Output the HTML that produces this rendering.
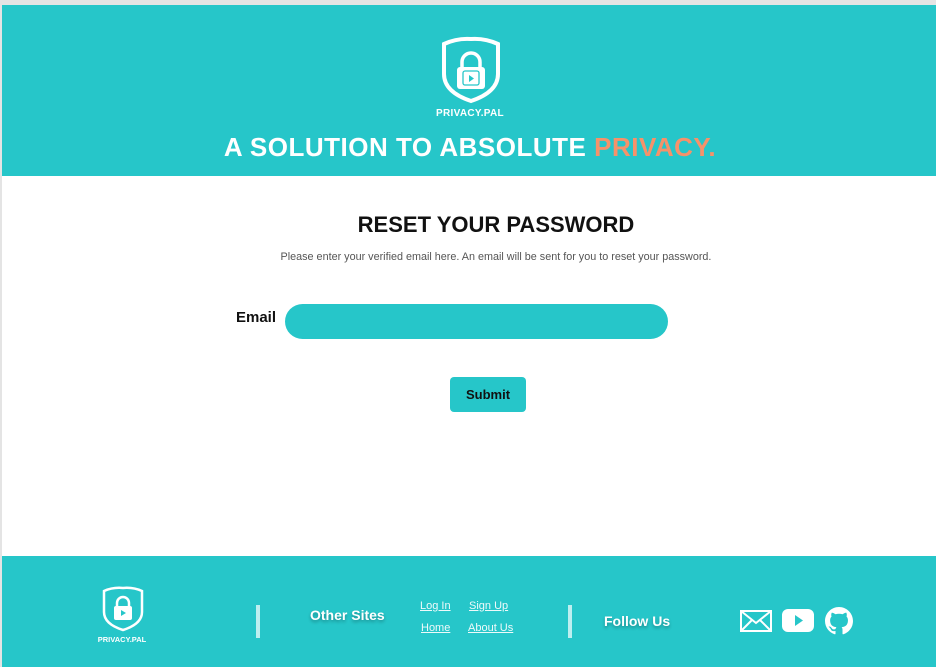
<!DOCTYPE html>
<html><head><style>
*{margin:0;padding:0;box-sizing:border-box}
body{width:936px;height:667px;background:#e4e4e4;position:relative;overflow:hidden;font-family:"Liberation Sans",sans-serif}
.hdr{position:absolute;left:2px;top:5px;width:934px;height:171px;background:#26c6c9}
.main{position:absolute;left:2px;top:176px;width:934px;height:380px;background:#fff}
.ftr{position:absolute;left:2px;top:556px;width:934px;height:111px;background:#26c6c9}
.abs{position:absolute}
.w{color:#fff}
.link{color:#eefafa;font-size:11px;text-decoration:underline}
.sh{text-shadow:0 2px 3px rgba(0,0,0,.3)}
</style></head><body>
<div class="hdr"></div><div class="main"></div><div class="ftr"></div>

<svg class="abs" style="left:441px;top:36px" width="60" height="68" viewBox="0 0 60 68">
<path d="M30 3 Q44 2 57 8 V38 Q57 56 30 65 Q3 56 3 38 V8 Q16 2 30 3Z" fill="none" stroke="#fff" stroke-width="4"/>
<path d="M21 32 V26 a9 9 0 0 1 18 0 V32" fill="none" stroke="#fff" stroke-width="3.5"/>
<rect x="16" y="31" width="28" height="22" rx="3" fill="#fff"/>
<rect x="22" y="35" width="16" height="14" rx="2" fill="none" stroke="#26c6c9" stroke-width="1.3"/>
<path d="M28 39 L28 46 L33 42.5Z" fill="#26c6c9"/>
</svg>
<div class="abs w" style="left:420px;top:108px;width:100px;text-align:center;font-size:10px;font-weight:bold;letter-spacing:.3px">PRIVACY.PAL</div>
<div class="abs w" style="left:0;top:132px;width:940px;text-align:center;font-size:26px;font-weight:bold;letter-spacing:.5px">A SOLUTION TO ABSOLUTE <span style="color:#f6926a">PRIVACY.</span></div>

<div class="abs" style="left:0;top:212px;width:992px;text-align:center;font-size:22px;font-weight:bold;color:#111">RESET YOUR PASSWORD</div>
<div class="abs" style="left:0;top:251px;width:992px;text-align:center;font-size:10.8px;color:#555">Please enter your verified email here. An email will be sent for you to reset your password.</div>
<div class="abs" style="left:236px;top:309px;font-size:15px;font-weight:bold;color:#111">Email</div>
<div class="abs" style="left:285px;top:304px;width:383px;height:35px;border-radius:18px;background:#26c6c9"></div>
<div class="abs" style="left:450px;top:377px;width:76px;height:35px;border-radius:4px;background:#26c6c9;text-align:center;line-height:35px;font-size:13px;font-weight:bold;color:#111">Submit</div>

<svg class="abs" style="left:102px;top:586px" width="42" height="46" viewBox="0 0 42 46">
<path d="M21 2 Q31 1 40 5 V26 Q40 38 21 44 Q2 38 2 26 V5 Q11 1 21 2Z" fill="none" stroke="#fff" stroke-width="2.5"/>
<path d="M15 21 V17 a6 6 0 0 1 12 0 V21" fill="none" stroke="#fff" stroke-width="2.5"/>
<rect x="12" y="20" width="18" height="14" rx="2" fill="#fff"/>
<path d="M19 24 L19 30 L24 27Z" fill="#26c6c9"/>
</svg>
<div class="abs w" style="left:92px;top:635px;width:60px;text-align:center;font-size:7.5px;font-weight:bold">PRIVACY.PAL</div>
<div class="abs" style="left:256px;top:605px;width:4px;height:33px;background:#bdeff0"></div>
<div class="abs w sh" style="left:310px;top:607px;font-size:14px;font-weight:bold">Other Sites</div>
<div class="abs link" style="left:420px;top:600px">Log In</div>
<div class="abs link" style="left:469px;top:600px">Sign Up</div>
<div class="abs link" style="left:421px;top:622px">Home</div>
<div class="abs link" style="left:468px;top:622px">About Us</div>
<div class="abs" style="left:568px;top:605px;width:4px;height:33px;background:#bdeff0"></div>
<div class="abs w sh" style="left:604px;top:613px;font-size:14px;font-weight:bold">Follow Us</div>
<svg class="abs" style="left:740px;top:610px" width="32" height="22" viewBox="0 0 32 22"><rect x="1" y="1" width="30" height="20" fill="none" stroke="#fff" stroke-width="2"/><path d="M1 1 L16 13 L31 1 M1 21 L12 10 M31 21 L20 10" fill="none" stroke="#fff" stroke-width="2"/></svg>
<svg class="abs" style="left:782px;top:608px" width="32" height="26" viewBox="0 0 32 26"><rect x="0" y="1" width="32" height="23" rx="6" fill="#fff"/><path d="M13 7 L13 18 L21 12.5Z" fill="#26c6c9"/></svg>
<svg class="abs" style="left:825px;top:607px" width="28" height="28" viewBox="0 0 16 16"><path fill="#fff" d="M8 0C3.580 0 0 3.58 0 8c0 3.54 2.29 6.53 5.47 7.59.4.07.55-.17.55-.38 0-.19-.01-.82-.01-1.49-2.010.37-2.53-.49-2.69-.94-.09-.23-.48-.94-.82-1.130-.28-.15-.68-.52-.01-.53.63-.01 1.08.58 1.23.82.72 1.21 1.870.87 2.33.66.07-.52.28-.87.51-1.07-1.78-.2-3.64-.89-3.64-3.95 0-.87.31-1.59.82-2.15-.08-.2-.36-1.02.08-2.12 0 0 .67-.21 2.2.82.64-.18 1.32-.27 2-.27.68 0 1.36.09 2 .27 1.53-1.04 2.2-.82 2.2-.82.44 1.1.16 1.92.08 2.12.51.56.82 1.27.82 2.15 0 3.07-1.87 3.75-3.65 3.95.29.25.54.73.54 1.48 0 1.07-.01 1.93-.01 2.2 0 .21.15.46.55.38A8.013 8.013 0 0016 8c0-4.42-3.58-8-8-8z"/></svg>
</body></html>
